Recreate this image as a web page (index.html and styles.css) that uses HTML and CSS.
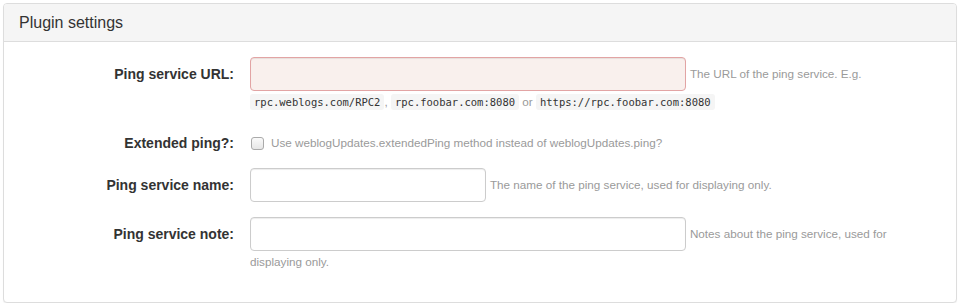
FILE: index.html
```html
<!DOCTYPE html>
<html lang="en">
<head>
    <meta charset="UTF-8">
    <title>Plugin settings</title>
    <link rel="stylesheet" href="styles.css">
</head>
<body>
    <div class="panel">
        <div class="panel-heading">Plugin settings</div>
        <form class="panel-body">
            <div class="form-row">
                <label class="form-label" for="pingUrl">Ping service URL:</label>
                <div class="form-field">
                    <input type="text" id="pingUrl" class="form-control wide has-error">
                    <span class="help">The URL of the ping service. E.g. <code>rpc.weblogs.com/RPC2</code>, <code>rpc.foobar.com:8080</code> or <code>https://rpc.foobar.com:8080</code></span>
                </div>
            </div>

            <div class="form-row check-row">
                <label class="form-label" for="pingExt">Extended ping?:</label>
                <div class="form-field">
                    <input type="checkbox" id="pingExt" class="check">
                    <span class="help">Use weblogUpdates.extendedPing method instead of weblogUpdates.ping?</span>
                </div>
            </div>

            <div class="form-row">
                <label class="form-label" for="pingName">Ping service name:</label>
                <div class="form-field">
                    <input type="text" id="pingName" class="form-control narrow">
                    <span class="help">The name of the ping service, used for displaying only.</span>
                </div>
            </div>

            <div class="form-row">
                <label class="form-label" for="pingNote">Ping service note:</label>
                <div class="form-field">
                    <input type="text" id="pingNote" class="form-control wide">
                    <span class="help">Notes about the ping service, used for displaying only.</span>
                </div>
            </div>
        </form>
    </div>
</body>
</html>
```

FILE: styles.css
```css
* {
    margin: 0;
    padding: 0;
    box-sizing: border-box;
    font-family: 'Liberation Sans', Arial, sans-serif;
}

body {
    background-color: #fff;
    padding: 3px 4px 0 3px;
    color: #333;
    font-size: 14px;
    line-height: 20px;
}

.panel {
    border: 1px solid #ddd;
    border-radius: 4px;
    box-shadow: 0 1px 1px rgba(0, 0, 0, 0.05);
    background-color: #fff;
}

.panel-heading {
    background-color: #f5f5f5;
    border-bottom: 1px solid #ddd;
    border-radius: 3px 3px 0 0;
    padding: 10px 15px;
    font-size: 16px;
    line-height: 17px;
    color: #333;
}

.panel-body {
    padding: 15px;
}

.form-row {
    display: flex;
    margin-bottom: 15px;
}

.form-label {
    width: 215px;
    flex-shrink: 0;
    text-align: right;
    font-weight: bold;
    padding-top: 7px;
    margin-right: 16px;
}

.form-field {
    flex: 1;
    line-height: 20px;
}

.form-control {
    display: inline-block;
    height: 34px;
    padding: 6px 12px;
    border: 1px solid #ccc;
    border-radius: 4px;
    font-size: 14px;
    vertical-align: middle;
    box-shadow: inset 0 1px 1px rgba(0, 0, 0, 0.075);
}

.form-control.wide {
    width: 436px;
}

.form-control.narrow {
    width: 236px;
}

.form-control.has-error {
    border-color: #e2a4a4;
    background-color: #f9f0ed;
}

.help {
    font-size: 11.7px;
    color: #9a9a9a;
}

code {
    font-family: 'DejaVu Sans Mono', monospace;
    font-size: 10.5px;
    color: #333;
    background-color: #f5f5f5;
    border-radius: 3px;
    padding: 2px 4px;
}

.check-row {
    margin-top: 16px;
    margin-bottom: 10px;
}

.check-row .form-label {
    padding-top: 5px;
}

.check-row .form-field {
    display: flex;
    align-items: center;
    height: 30px;
}

.check {
    appearance: none;
    width: 13px;
    height: 13px;
    border: 1px solid #aaa;
    border-radius: 3px;
    background: linear-gradient(#fafafa, #e6e6e6);
    margin: 0 7px 0 1px;
}
```
